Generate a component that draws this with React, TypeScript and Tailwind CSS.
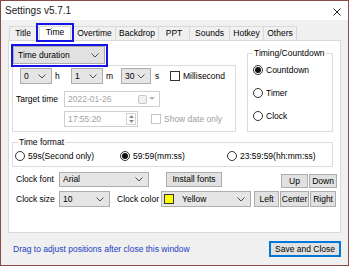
import React from 'react'

const Chevron = ({ color = '#4d4d4d' }: { color?: string }) => (
  <svg width="8" height="5" viewBox="0 0 8 5" className="shrink-0">
    <path d="M0.5 0.5 L4 4 L7.5 0.5" stroke={color} strokeWidth="1" fill="none" />
  </svg>
)

function Combo({ value, className, swatch }: { value: string; className: string; swatch?: boolean }) {
  return (
    <div className={`flex items-center bg-[#e5e5e5] border border-[#adadad] pl-[3px] pr-[5px] ${className}`}>
      {swatch && <span className="w-[10px] h-[10px] bg-[#ffff00] border border-[#333] mr-[8px] -ml-[1px]" />}
      <span className="flex-1 truncate">{value}</span>
      <Chevron />
    </div>
  )
}

function Btn({ label, className }: { label: string; className: string }) {
  return (
    <div className={`flex items-center justify-center whitespace-nowrap bg-[#e1e1e1] border border-[#adadad] ${className}`}>
      {label}
    </div>
  )
}

function Radio({ label, checked }: { label: string; checked?: boolean }) {
  return (
    <div className="flex items-center h-[12px] whitespace-nowrap">
      <span className="w-[10px] h-[10px] rounded-full border border-[#333] bg-white flex items-center justify-center shrink-0">
        {checked && <span className="w-[6px] h-[6px] rounded-full bg-[#111]" />}
      </span>
      <span className="ml-[3px]">{label}</span>
    </div>
  )
}

function Check({ disabled }: { disabled?: boolean }) {
  return (
    <span
      className={`block w-[10px] h-[10px] bg-white border shrink-0 ${disabled ? 'border-[#c4c4c4]' : 'border-[#333]'}`}
    />
  )
}

const tabs = [
  { label: 'Title', w: 'w-[28px]' },
  { label: 'Time', w: '', selected: true },
  { label: 'Overtime', w: 'w-[43px]' },
  { label: 'Backdrop', w: 'w-[44px]' },
  { label: 'PPT', w: 'w-[32px]' },
  { label: 'Sounds', w: 'w-[41px]' },
  { label: 'Hotkey', w: 'w-[35px]' },
  { label: 'Others', w: 'w-[34px]' },
]

export default function App() {
  return (
    <div className="w-[350px] h-[268px] bg-white font-['Liberation_Sans',Arial,sans-serif] text-[8.5px] text-black leading-none">
      <div className="w-[349px] h-[266px] border border-[#8b4a4a] bg-[#f0f0f0] flex flex-col">
        {/* title bar */}
        <div className="h-[19px] bg-white flex items-center justify-between pl-[4px] pr-[7px]">
          <span className="text-[10px] text-[#1a1a1a]">Settings v5.7.1</span>
          <svg width="8" height="8" viewBox="0 0 8 8" className="mt-[2px]">
            <path d="M0.5 0.5 L7.5 7.5 M7.5 0.5 L0.5 7.5" stroke="#222" strokeWidth="1" />
          </svg>
        </div>

        {/* tabs */}
        <div className="h-[20px] flex items-end pl-[8px]">
          {tabs.map((t, i) =>
            t.selected ? (
              <div
                key={t.label}
                className="relative z-10 -mb-[2px] -ml-px w-[38px] h-[19px] border-2 border-[#1414e6] px-[1px] pt-[1px]"
              >
                <div className="h-full bg-white border border-b-0 border-[#d9d9d9] flex items-center justify-center pb-[2px]">
                  {t.label}
                </div>
              </div>
            ) : (
              <div
                key={t.label}
                className={`h-[14px] flex items-center justify-center border border-b-0 border-[#d9d9d9] bg-[#f0f0f0] ${t.w} ${i > 0 ? '-ml-px' : ''}`}
              >
                {t.label}
              </div>
            )
          )}
        </div>

        {/* tab panel */}
        <div className="mx-[7px] h-[193px] border border-[#d9d9d9] bg-white flex flex-col">
          <div className="flex pl-[2px] pt-[3px]">
            {/* left column */}
            <div className="flex flex-col items-start">
              <div className="relative z-10 w-[97px] h-[23px] border-2 border-[#1414e6]">
                <div className="w-[92px] h-[18px] flex items-center bg-[#e1e1e1] border border-[#adadad] pl-[4px] pr-[5px]">
                  <span className="flex-1">Time duration</span>
                  <Chevron />
                </div>
              </div>
              <div className="ml-[1px] -mt-[2px] w-[224px] h-[67px] border border-[#dcdcdc] flex flex-col">
                <div className="flex items-center mt-[2px] pl-[7px]">
                  <Combo value="0" className="w-[32px] h-[16px]" />
                  <span className="ml-[3px] w-[16px]">h</span>
                  <Combo value="1" className="w-[32px] h-[16px]" />
                  <span className="ml-[3px] w-[15px]">m</span>
                  <Combo value="30" className="w-[30px] h-[16px]" />
                  <span className="ml-[4px] w-[15px]">s</span>
                  <Check />
                  <span className="ml-[3px]">Millisecond</span>
                </div>
                <div className="flex items-center mt-[7px] pl-[3px]">
                  <span className="w-[48px]">Target time</span>
                  <div className="w-[96px] h-[16px] flex items-center bg-white border border-[#cfcfcf] pl-[3px] pr-[4px] text-[#a3a3a3]">
                    <span className="flex-1">2022-01-26</span>
                    <span className="w-[9px] h-[9px] rounded-[2px] border border-[#c8c8c8] bg-[#f2f2f2]" />
                    <svg width="6" height="4" viewBox="0 0 6 4" className="ml-[2px]">
                      <path d="M0 0 L6 0 L3 3 Z" fill="#b5b5b5" />
                    </svg>
                  </div>
                </div>
                <div className="flex items-center mt-[4px] pl-[51px]">
                  <div className="w-[74px] h-[16px] flex items-center bg-white border border-[#cfcfcf] pl-[3px] pr-[1px] text-[#a3a3a3]">
                    <span className="flex-1">17:55:20</span>
                    <div className="w-[10px] h-[12px] border border-[#d4d4d4] flex flex-col items-center justify-center gap-[2px]">
                      <svg width="5" height="3" viewBox="0 0 5 3">
                        <path d="M0 3 L2.5 0 L5 3 Z" fill="#8a8a8a" />
                      </svg>
                      <svg width="5" height="3" viewBox="0 0 5 3">
                        <path d="M0 0 L5 0 L2.5 3 Z" fill="#8a8a8a" />
                      </svg>
                    </div>
                  </div>
                  <span className="ml-[13px]">
                    <Check disabled />
                  </span>
                  <span className="ml-[3px] text-[#a0a0a0]">Show date only</span>
                </div>
              </div>
            </div>

            {/* timing group */}
            <div className="relative ml-[11px] mt-[9px] w-[86px] h-[79px] border border-[#dcdcdc] flex flex-col pl-[5px] pt-[10px] gap-[11px]">
              <span className="absolute -top-[6px] left-[5px] bg-white px-[1px] leading-[11px]">Timing/Countdown</span>
              <Radio label="Countdown" checked />
              <Radio label="Timer" />
              <Radio label="Clock" />
            </div>
          </div>

          {/* time format */}
          <div className="relative ml-[3px] mt-[10px] w-[321px] h-[25px] border border-[#dcdcdc] flex pl-[2px] pt-[7px]">
            <span className="absolute -top-[6px] left-[5px] bg-white px-[1px] leading-[11px]">Time format</span>
            <div className="w-[105px]">
              <Radio label="59s(Second only)" />
            </div>
            <div className="w-[107px]">
              <Radio label="59:59(mm:ss)" checked />
            </div>
            <Radio label="23:59:59(hh:mm:ss)" />
          </div>

          {/* clock font */}
          <div className="flex items-start ml-[7px] mt-[5px]">
            <span className="w-[43px] h-[15px] flex items-center whitespace-nowrap">Clock font</span>
            <Combo value="Arial" className="w-[90px] h-[15px]" />
            <Btn label="Install fonts" className="ml-[17px] w-[56px] h-[15px]" />
            <Btn label="Up" className="ml-[59px] mt-[2px] w-[27px] h-[14px]" />
            <Btn label="Down" className="ml-[1px] mt-[2px] w-[28px] h-[14px]" />
          </div>

          {/* clock size */}
          <div className="flex items-center ml-[7px] mt-[3px]">
            <span className="w-[43px] whitespace-nowrap">Clock size</span>
            <Combo value="10" className="w-[51px] h-[16px]" />
            <span className="ml-[7px] whitespace-nowrap">Clock color</span>
            <Combo value="Yellow" swatch className="ml-[2px] w-[90px] h-[16px]" />
            <Btn label="Left" className="ml-[3px] w-[25px] h-[16px]" />
            <Btn label="Center" className="ml-[1px] w-[29px] h-[16px]" />
            <Btn label="Right" className="ml-[1px] w-[26px] h-[16px]" />
          </div>
        </div>

        {/* footer */}
        <div className="flex-1 flex items-center justify-between pl-[12px] pr-[7px]">
          <span className="text-[#2140c4]">Drag to adjust positions after close this window</span>
          <div className="w-[72px] h-[16px] flex items-center justify-center bg-[#e1e1e1] border border-[#0078d7] shadow-[inset_0_0_0_1px_#0078d7]">
            Save and Close
          </div>
        </div>
      </div>
    </div>
  )
}
